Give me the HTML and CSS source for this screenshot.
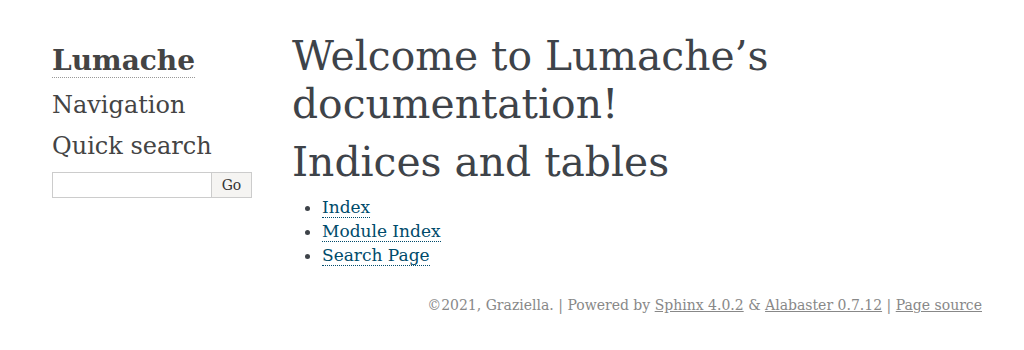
FILE: index.html
```html
<!DOCTYPE html>
<html lang="en">
<head>
<meta charset="utf-8">
<title>Welcome to Lumache’s documentation! — Lumache documentation</title>
<link rel="stylesheet" href="styles.css">
</head>
<body>
<div class="document">
  <div class="sidebar">
    <div class="sidebar-wrapper">
      <h1 class="logo"><a href="#">Lumache</a></h1>
      <h3 class="side-heading">Navigation</h3>
      <div class="searchbox" role="search">
        <h3 class="side-heading">Quick search</h3>
        <form class="search">
          <input class="search-text" type="text" name="q" aria-labelledby="searchlabel">
          <input class="search-go" type="submit" value="Go">
        </form>
      </div>
    </div>
  </div>
  <div class="bodywrapper">
    <div class="body" role="main">
      <section>
        <h1 class="heading">Welcome to Lumache’s documentation!</h1>
      </section>
      <section>
        <h1 class="heading">Indices and tables</h1>
        <ul class="simple">
          <li><a class="ref" href="#">Index</a></li>
          <li><a class="ref" href="#">Module Index</a></li>
          <li><a class="ref" href="#">Search Page</a></li>
        </ul>
      </section>
    </div>
  </div>
</div>
<div class="footer">
  ©2021, Graziella. | Powered by <a href="#">Sphinx 4.0.2</a> &amp; <a href="#">Alabaster 0.7.12</a> | <a href="#">Page source</a>
</div>
</body>
</html>
```
FILE: styles.css
```css
html, body {
  margin: 0;
  padding: 0;
}
body {
  font-family: "DejaVu Serif", Georgia, serif;
  font-size: 17px;
  background-color: #fff;
  color: #000;
}
.document {
  width: 940px;
  margin: 32px auto 0 auto;
  display: flex;
  align-items: flex-start;
}
.sidebar {
  flex: 0 0 220px;
  width: 220px;
  font-size: 14px;
  line-height: 1.5;
}
.sidebar-wrapper {
  padding: 18px 10px;
}
.sidebar a {
  color: #444;
  text-decoration: none;
  border-bottom: 1px dotted #999;
}
.logo {
  font-family: "DejaVu Serif", Georgia, serif;
  font-size: 28px;
  font-weight: bold;
  margin: -10px 0 5px 0;
  padding: 0;
  color: #444;
}
.side-heading {
  font-family: "DejaVu Serif", Georgia, serif;
  color: #444;
  font-size: 24px;
  font-weight: normal;
  margin: 0 0 5px 0;
  padding: 0;
}
.search {
  display: flex;
  width: 200px;
  margin: 8px 0 0 0;
}
.search input {
  border: 1px solid #ccc;
  font-family: "DejaVu Serif", Georgia, serif;
  font-size: 14px;
  line-height: normal;
  padding: 4px;
  box-sizing: border-box;
  margin: 0;
  border-radius: 0;
}
.search-text {
  width: 160px;
  background: #fff;
}
.search-go {
  width: 40px;
  border-left: none !important;
  background: #f5f4f2;
  color: #333;
}
.bodywrapper {
  flex: 1 1 auto;
  min-width: 0;
}
.body {
  background-color: #fff;
  color: #3e4349;
  padding: 0 30px 0 30px;
}
.heading {
  font-family: "DejaVu Serif", Georgia, serif;
  font-weight: normal;
  font-size: 40.8px;
  margin: 0 0 10px 0;
  padding: 0;
}
section + section .heading {
  margin-top: 6px;
}
.simple {
  margin: 8px 0 10px 30px;
  padding: 0;
}
.simple li {
  line-height: 1.4em;
}
.ref {
  color: #004b6b;
  text-decoration: none;
  border-bottom: 1px dotted #004b6b;
}
.footer {
  width: 940px;
  margin: 20px auto 30px auto;
  font-size: 14px;
  color: #888;
  text-align: right;
}
.footer a {
  color: #888;
  text-decoration: underline;
}
```
